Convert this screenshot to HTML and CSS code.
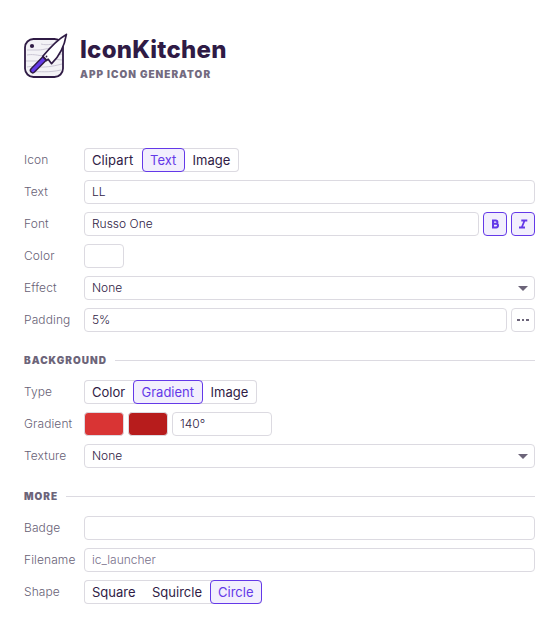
FILE: index.html
```html
<!DOCTYPE html>
<html lang="en">
<head>
<meta charset="utf-8">
<title>IconKitchen</title>
<link rel="stylesheet" href="styles.css">
</head>
<body>
<header class="header">
  <svg class="logo" width="48" height="48" viewBox="0 0 48 48" fill="none">
    <rect x="3" y="7" width="38" height="38" rx="8.5" fill="#f3f2f6"/>
    <path d="M5 18h11c7 0 10-3 24-2M5 23c11-2 14 4 35-1M4 29h11c8 0 11-3 25-1M5 35c9-2 12 3 35-3M8 40c12-1 17 1 31-2M19 12c7 2 12-1 20 0" stroke="#cbc7d5" stroke-width="1"/>
    <rect x="3" y="7" width="38" height="38" rx="8.5" stroke="#2f1b45" stroke-width="1.8"/>
    <circle cx="10" cy="14" r="2.1" fill="#2f1b45"/>
    <path d="M22.500 26.500 10.800 38.400" stroke="#2f1b45" stroke-width="6.200" stroke-linecap="round"/>
    <path d="M22 27 10.800 38.400" stroke="#6439e8" stroke-width="3.300" stroke-linecap="round"/>
    <path d="M44.400 2.400C37 6.500 28 15.500 20.800 24.300l3.900 4.100 1.500-1.200 3.400 4.500C36.500 25 42.500 14 44.400 2.400z" fill="#fff" stroke="#2f1b45" stroke-width="1.700" stroke-linejoin="round"/>
    <path d="m20.500 24.300 4.400 4.600" stroke="#2f1b45" stroke-width="1.400"/>
    <circle cx="24.500" cy="24.500" r=".9" fill="#2f1b45"/>
  </svg>
  <div>
    <h1 class="title">IconKitchen</h1>
    <p class="subtitle">App icon generator</p>
  </div>
</header>
<main class="form">
  <div class="row"><span class="label">Icon</span>
    <div class="segments"><button class="segment clipart">Clipart</button><button class="segment text selected">Text</button><button class="segment image">Image</button></div></div>
  <div class="row"><span class="label">Text</span><div class="field">LL</div></div>
  <div class="row"><span class="label">Font</span><div class="field">Russo One</div><button class="toggle selected">
    <svg width="22" height="22" viewBox="0 0 22 22" fill="none" stroke="currentColor" stroke-width="2"><path d="M9 7.600h2.800a1.500 1.500 0 0 1 0 3.200H9zM9 10.800h3.200a1.700 1.700 0 0 1 0 3.600H9z"/></svg></button><button class="toggle selected">
    <svg width="22" height="22" viewBox="0 0 22 22" fill="none" stroke="currentColor" stroke-width="1.800"><path d="M9.300 7.500h6M7 14.500h6M12.600 7.500l-2.900 7"/></svg></button></div>
  <div class="row"><span class="label">Color</span><span class="swatch"></span></div>
  <div class="row"><span class="label">Effect</span><div class="field select">None<span class="arrow"></span></div></div>
  <div class="row"><span class="label">Padding</span><div class="field">5%</div><button class="toggle"><span class="dots"><i></i><i></i><i></i></span></button></div>
  <h2 class="section">Background</h2>
  <div class="row"><span class="label">Type</span>
    <div class="segments"><button class="segment color">Color</button><button class="segment gradient selected">Gradient</button><button class="segment image">Image</button></div></div>
  <div class="row"><span class="label">Gradient</span><span class="swatch red"></span><span class="swatch dark-red"></span><div class="field angle">140°</div></div>
  <div class="row"><span class="label">Texture</span><div class="field select">None<span class="arrow"></span></div></div>
  <h2 class="section">More</h2>
  <div class="row"><span class="label">Badge</span><div class="field"></div></div>
  <div class="row"><span class="label">Filename</span><div class="field placeholder">ic_launcher</div></div>
  <div class="row"><span class="label">Shape</span>
    <div class="segments"><button class="segment square">Square</button><button class="segment squircle">Squircle</button><button class="segment circle selected">Circle</button></div></div>
</main>
</body>
</html>
```
FILE: styles.css
```css
* { box-sizing: border-box; }
body {
  margin: 0;
  padding: 32px 23px 30px 24px;
  background: #fff;
  color: #2f1b45;
  font-family: Inter, "Liberation Sans", sans-serif;
}
.header { display: flex; height: 116px; align-items: flex-start; }
.logo { flex: none; margin-left: -2px; margin-right: 10px; }
.title { margin: 2px 0 0; font-size: 24px; line-height: 32px; font-weight: 800; letter-spacing: .25px; }
.subtitle { margin: 0; font-size: 10px; line-height: 16px; font-weight: 900; letter-spacing: 1px; color: #736b80; text-transform: uppercase; }
.form { display: flex; flex-direction: column; gap: 8px; }
.row { display: flex; height: 24px; gap: 4px; align-items: center; }
.label { flex: none; width: 56px; font-size: 12px; line-height: 24px; color: #685f76; white-space: nowrap; font-weight: 300; letter-spacing: .1px; }
.field {
  display: flex;
  flex: 1;
  height: 24px;
  align-items: center;
  padding: 0 7px;
  border: 1px solid #dcdae1;
  border-radius: 4px;
  font-size: 12px;
  line-height: 22px;
  font-weight: 300;
}
.angle { flex: 0 0 100px; }
.placeholder { color: #78708a; }
.select { justify-content: space-between; }
.arrow { border: 5px solid transparent; border-top-color: #6c6479; border-bottom: 0; margin-right: -1px; }
.segments { display: flex; height: 24px; border-radius: 4px; box-shadow: inset 0 0 0 1px #dcdae1; }
.segment {
  padding: 0 0 0 7px;
  text-align: left;
  border: 1px solid transparent;
  border-radius: 4px;
  background: transparent;
  color: #2f1b45;
  font: 400 13px/22px Inter, "Liberation Sans", sans-serif;
  white-space: nowrap;
}
.segment.image { padding-left: 6.500px; }
.clipart { width: 58px; letter-spacing: .1px; }
.text { width: 43px; }
.image { width: 54px; }
.color { width: 49px; }
.gradient { width: 70px; }
.segment.gradient { padding-left: 7.500px; }
.square { width: 60px; }
.squircle { width: 66px; }
.circle { width: 52px; }
.selected.selected { background: #f2effd; border-color: #6439e8; color: #6439e8; }
.toggle {
  display: flex;
  flex: none;
  width: 24px;
  height: 24px;
  padding: 0;
  align-items: center;
  justify-content: center;
  border: 1px solid #dcdae1;
  border-radius: 4px;
  background: #fff;
}
.toggle svg { flex: none; }
.dots { display: flex; gap: 1.500px; }
.dots i { width: 2.700px; height: 2px; background: #6c6479; }
.swatch { width: 40px; height: 24px; border: 1px solid #dcdae1; border-radius: 4px; }
.red { background: #d93434; }
.dark-red { background: #b71c1c; }
.section {
  display: flex;
  height: 24px;
  margin: 8px 0 0;
  align-items: center;
  gap: 8px;
  color: #6c6479;
  font-size: 10px;
  line-height: 24px;
  font-weight: 900;
  letter-spacing: 1px;
  text-transform: uppercase;
}
.section::after { content: ""; flex: 1; height: 1px; background: #dcdae1; }
```
